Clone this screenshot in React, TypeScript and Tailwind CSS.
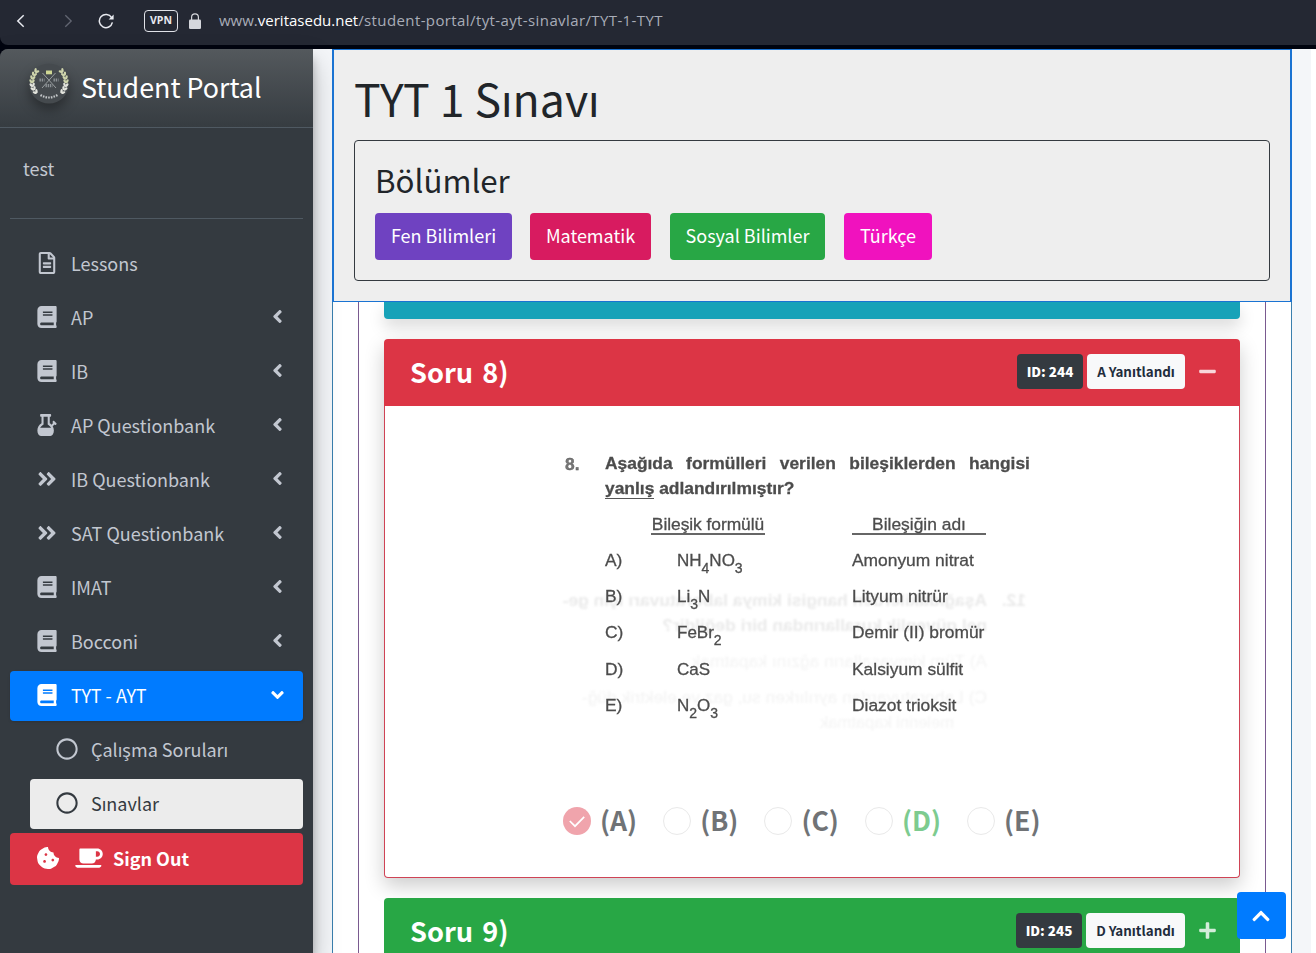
import React from "react";
import {
  FaAngleDoubleRight,
  FaAngleDown,
  FaAngleLeft,
  FaBong,
  FaBook,
  FaChevronUp,
  FaCoffee,
  FaCookieBite,
  FaMinus,
  FaPlus,
  FaRegCircle,
  FaRegFileAlt,
} from "react-icons/fa";

type IconType = React.ComponentType<{ className?: string }>;

const navItems: { label: string; icon: IconType; expandable: boolean }[] = [
  { label: "Lessons", icon: FaRegFileAlt, expandable: false },
  { label: "AP", icon: FaBook, expandable: true },
  { label: "IB", icon: FaBook, expandable: true },
  { label: "AP Questionbank", icon: FaBong, expandable: true },
  { label: "IB Questionbank", icon: FaAngleDoubleRight, expandable: true },
  { label: "SAT Questionbank", icon: FaAngleDoubleRight, expandable: true },
  { label: "IMAT", icon: FaBook, expandable: true },
  { label: "Bocconi", icon: FaBook, expandable: true },
];

const sections = [
  { label: "Fen Bilimleri", style: "w-[137px] mr-[18px] bg-[#6f42c1]" },
  { label: "Matematik", style: "w-[121px] mr-[19px] bg-[#d81b60]" },
  { label: "Sosyal Bilimler", style: "w-[155px] mr-[19px] bg-[#28a745]" },
  { label: "Türkçe", style: "w-[88px] bg-[#f012be]" },
];

function BrowserBar() {
  return (
    <div className="h-[49px] shrink-0 bg-[#00040f]">
      <div className="flex h-[45px] items-center rounded-bl-lg bg-[#242833] pb-1 pl-[14px] text-[#e8eaf0]">
        <svg className="h-[14px] w-[14px]" viewBox="0 0 14 14" fill="none" stroke="currentColor" strokeWidth="1.5">
          <path d="M9.7 1.2 3.8 7l5.900 5.800" />
        </svg>
        <svg className="ml-[33px] h-[14px] w-[14px] text-[#626672]" viewBox="0 0 14 14" fill="none" stroke="currentColor" strokeWidth="1.3">
          <path d="M4.3 1.2 10.2 7l-5.900 5.800" />
        </svg>
        <svg className="ml-[23px] h-[16px] w-[16px]" viewBox="0 0 16 16" fill="none" stroke="currentColor" strokeWidth="1.5">
          <path d="M14.4 9.4A6.6 6.6 0 1 1 13.6 4.6" />
          <path d="M15.6 1.6v5h-5z" fill="currentColor" stroke="none" />
        </svg>
        <span className="ml-[30px] flex h-[22px] w-[34px] items-center justify-center rounded-[4px] border border-[#e0e2e8] font-['Open_Sans',sans-serif] text-[10.5px] font-bold leading-none">
          VPN
        </span>
        <svg className="ml-[11px] h-[16px] w-[12px] text-[#d5d7dc]" viewBox="0 0 12 16">
          <path d="M2.6 7V4.2a3.4 3.4 0 0 1 6.8 0V7" fill="none" stroke="currentColor" strokeWidth="1.2" />
          <rect x="0" y="6.5" width="12" height="9.5" rx="1.3" fill="currentColor" />
        </svg>
        <span className="ml-[18px] whitespace-nowrap pb-[2px] font-['Open_Sans',sans-serif] text-[15px] leading-5 text-[#a9adb8]">
          www.<span className="text-white">veritasedu.net</span>
          <span className="tracking-[0.39px]">/student-portal/tyt-ayt-sinavlar/TYT-1-TYT</span>
        </span>
      </div>
    </div>
  );
}

const laurel = [
  { x: 12.2, y: 5.5, turn: 40 },
  { x: 14.6, y: 8.6, turn: 28 },
  { x: 16.2, y: 12, turn: 14 },
  { x: 17, y: 15.6, turn: 2 },
  { x: 16.8, y: 19.4, turn: -10 },
  { x: 15.8, y: 23, turn: -24 },
  { x: 13.8, y: 26.4, turn: -40 },
];

function LaurelBranch() {
  return (
    <>
      {laurel.map(({ x, y, turn }) => (
        <g key={y} transform={`translate(${x} ${y}) rotate(${-turn})`} fill={y < 18 ? "#ced4ac" : "#e3e4dd"}>
          <ellipse cx="1.3" cy="0" rx="1.2" ry="2.2" transform="rotate(30)" />
          <ellipse cx="-1.3" cy="0" rx="1.2" ry="2.2" transform="rotate(-30)" />
        </g>
      ))}
    </>
  );
}

function Crest() {
  return (
    <svg className="h-[40px] w-[40px] overflow-visible drop-shadow-[0_6px_6px_rgba(0,0,0,0.35)]" viewBox="0 0 40 40">
      <circle cx="20" cy="19.5" r="20" fill="#454a4e" />
      <g transform="translate(20 1)">
        <LaurelBranch />
      </g>
      <g transform="translate(20 1) scale(-1 1)">
        <LaurelBranch />
      </g>
      <path d="M13.5 9 27 24M26.5 9 13 24" stroke="#a2a6a8" strokeWidth="0.9" />
      <path d="M17 6.5h6v3.800h-6z" fill="#cfd794" />
      <path d="M10.5 16h5M24.5 16h5M16.5 21.700h7" stroke="#8d9296" strokeWidth="3.200" strokeDasharray="1.400 0.800" />
      <path d="M11.5 31q8.500 5 17 0" fill="none" stroke="#c3c6c8" strokeWidth="2.200" strokeDasharray="1.600 1.100" />
    </svg>
  );
}

function Sidebar() {
  return (
    <aside className="relative z-10 flex w-[313px] shrink-0 flex-col rounded-tl-lg bg-[#343a40] text-[18px] text-[#c2c7d0] shadow-[0_14px_28px_rgba(0,0,0,0.25),0_10px_10px_rgba(0,0,0,0.22)]">
      <div className="flex h-[79px] shrink-0 items-center rounded-tl-lg border-b border-[#4f5962] bg-gradient-to-b from-[#54595d] to-[#363c41] pl-[29px]">
        <div className="-mt-2">
          <Crest />
        </div>
        <span className="ml-[12px] whitespace-nowrap pb-[3px] text-[26.8px] leading-9 text-white">Student Portal</span>
      </div>
      <div className="mx-[10px] h-[91px] shrink-0 border-b border-[#4f5962] pl-[13px] pt-[26px] leading-7">test</div>
      <nav className="mx-[10px] mt-[20px] flex flex-col gap-1">
        {navItems.map(({ label, icon: Icon, expandable }) => (
          <div key={label} className="flex h-[50px] items-center pl-[26px] pr-[19px]">
            <Icon className="mb-[3px] h-[22px] w-[22px]" />
            <span className="ml-[13px] pb-[2px] leading-7">{label}</span>
            {expandable && <FaAngleLeft className="mb-[3px] ml-auto h-[21px] w-[13px]" />}
          </div>
        ))}
        <div className="flex h-[50px] items-center rounded bg-[#007bff] pl-[26px] pr-[18px] text-white shadow">
          <FaBook className="mb-[3px] h-[22px] w-[22px]" />
          <span className="ml-[13px] pb-[2px] leading-7">TYT - AYT</span>
          <FaAngleDown className="mb-[3px] ml-auto h-[20px] w-[15px]" />
        </div>
        <div className="ml-5 flex h-[50px] items-center pl-[26px]">
          <FaRegCircle className="mb-[3px] h-[22px] w-[22px]" />
          <span className="ml-[13px] pb-[2px] leading-7">Çalışma Soruları</span>
        </div>
        <div className="ml-5 flex h-[50px] items-center rounded bg-[#ececec] pl-[26px] text-[#343a40]">
          <FaRegCircle className="mb-[3px] h-[22px] w-[22px]" />
          <span className="ml-[13px] pb-[2px] leading-7">Sınavlar</span>
        </div>
        <div className="flex h-[52px] items-center rounded bg-[#dc3545] pl-[27px] font-bold text-white">
          <FaCookieBite className="mb-[3px] h-[22px] w-[22px]" />
          <FaCoffee className="mb-[3px] ml-4 h-[22px] w-[28px]" />
          <span className="ml-[10px] pb-[2px] leading-7">Sign Out</span>
        </div>
      </nav>
    </aside>
  );
}

function Sub({ children }: { children: React.ReactNode }) {
  return <sub className="relative -bottom-[7px] align-baseline text-[14px] leading-none">{children}</sub>;
}

const answers = [
  { key: "A)", formula: <>NH<Sub>4</Sub>NO<Sub>3</Sub></>, name: "Amonyum nitrat" },
  { key: "B)", formula: <>Li<Sub>3</Sub>N</>, name: "Lityum nitrür" },
  { key: "C)", formula: <>FeBr<Sub>2</Sub></>, name: "Demir (II) bromür" },
  { key: "D)", formula: <>CaS</>, name: "Kalsiyum sülfit" },
  { key: "E)", formula: <>N<Sub>2</Sub>O<Sub>3</Sub></>, name: "Diazot trioksit" },
];

/* Print from the back of the scanned sheet, faintly visible through the paper. */
function ShowThrough() {
  return (
    <div aria-hidden className="absolute left-[-2px] top-[182px] w-[468px] -scale-x-100 whitespace-nowrap pl-[1px] text-[17.4px] leading-[25px] blur-[0.9px]">
      <div className="flex font-bold text-[#eaeaea]">
        <span className="w-[39px]">12.</span>
        <div>
          <div>Aşağıdakilerden hangisi kimya laboratuvarı için ge-</div>
          <div>nel güvenlik kurallarından biri değildir?</div>
        </div>
      </div>
      <div className="mt-[11px] pl-[39px] text-[#f4f4f4]">A) Tüm kimyasalların ağzını kapatmak</div>
      <div className="mt-[11px] pl-[39px] text-[#f3f3f3]">C) Laboratuvardan ayrılırken su, gaz ve elektrik düğ-</div>
      <div className="pl-[72px] text-[16.5px] text-[#f4f4f4]">melerini kapatmak</div>
    </div>
  );
}

function QuestionScan() {
  return (
    <div className="relative ml-[176px] w-[480px] pt-[45px] font-['Liberation_Sans',sans-serif] text-[17.4px] text-[#4c4c4c]">
      <ShowThrough />
      <div className="relative blur-[0.35px] [-webkit-text-stroke:0.3px_#4c4c4c]">
        <div className="flex h-[51px]">
          <div className="w-[44px] shrink-0 pl-[4px] font-bold leading-[26px] text-[#777]">8.</div>
          <div className="w-[425px] shrink-0 font-bold leading-[25px]">
            <div className="flex justify-between">
              <span>Aşağıda</span>
              <span>formülleri</span>
              <span>verilen</span>
              <span>bileşiklerden</span>
              <span>hangisi</span>
            </div>
            <div className="whitespace-nowrap">
              <span className="inline-block h-[23px] border-b border-[#555]">yanlış</span> adlandırılmıştır?
            </div>
          </div>
        </div>
        <div className="mt-[10px] flex pl-[90px] leading-[25px]">
          <div className="h-[23px] w-[114px] whitespace-nowrap border-b-2 border-[#666] text-center tracking-[-0.05px]">Bileşik formülü</div>
          <div className="ml-[87px] h-[23px] w-[134px] whitespace-nowrap border-b-2 border-[#666] text-center">Bileşiğin adı</div>
        </div>
        <div className="mt-[8px] pl-[44px]">
          {answers.map((a) => (
            <div key={a.key} className="flex h-[36.2px] items-center whitespace-nowrap leading-[20px]">
              <span className="w-[72px] pb-[2px]">{a.key}</span>
              <span className="w-[175px] text-[17px]">{a.formula}</span>
              <span className="pb-[2px]">{a.name}</span>
            </div>
          ))}
        </div>
      </div>
    </div>
  );
}

const choices = [
  { label: "(A)", checked: true, correct: false },
  { label: "(B)", checked: false, correct: false },
  { label: "(C)", checked: false, correct: false },
  { label: "(D)", checked: false, correct: true },
  { label: "(E)", checked: false, correct: false },
];

function Choices() {
  return (
    <div className="mt-[77px] flex h-[40px] items-center gap-[26px] pl-[178px]">
      {choices.map((c) => (
        <div key={c.label} className="flex items-center">
          {c.checked ? (
            <span className="flex h-7 w-7 items-center justify-center rounded-full bg-[#f0a4ac]">
              <svg className="h-4 w-4" viewBox="0 0 16 16" fill="none" stroke="white" strokeWidth="1.7">
                <path d="M.8 8 6 13.2 15.2 3.8" />
              </svg>
            </span>
          ) : (
            <span className="h-7 w-7 rounded-full border border-[#e9e9e9]" />
          )}
          <span className={`ml-[9px] pb-[1px] text-[26.6px] font-bold leading-10 ${c.correct ? "text-[#7dcb8f]" : "text-[#707376]"}`}>{c.label}</span>
        </div>
      ))}
    </div>
  );
}

function CardHeader({ title, id, status, open }: { title: string; id: string; status: string; open: boolean }) {
  return (
    <div className={`flex h-[67px] items-center rounded-t px-[26px] ${open ? "bg-[#dc3545]" : "bg-[#28a745]"}`}>
      <h4 className="pb-[3px] text-[27.2px] font-bold leading-10 text-white [word-spacing:3px]">{title}</h4>
      <div className="mb-[2px] ml-auto flex items-center gap-1 text-[13.4px] font-bold leading-[35px]">
        <span className="h-[35px] w-[66px] rounded bg-[#343a40] text-center font-black text-white">{id}</span>
        <span className={`h-[35px] rounded bg-[#f8f9fa] text-center text-[#1f2d3d] ${open ? "w-[98px]" : "w-[99px]"}`}>{status}</span>
      </div>
      <span className="mb-[2px] ml-[14px] mr-[-3px] flex w-[18px] text-white/80">
        {open ? <FaMinus className="h-[19px] w-[17px]" /> : <FaPlus className="h-[19px] w-[17px]" />}
      </span>
    </div>
  );
}

function Content() {
  return (
    <main className="flex min-w-0 flex-1 bg-[#f4f6f9] pl-[19px]">
      <div className="flex w-[960px] flex-col">
        <header className="z-20 h-[253px] shrink-0 border-x-2 border-b border-t border-[#1a73d2] bg-[#eee] px-5 text-[#212529]">
          <h1 className="pt-[18px] text-[44.6px] leading-[60px]">TYT 1 Sınavı</h1>
          <div className="mt-[12px] h-[141px] rounded border border-[#343a40] px-5 pt-[20px]">
            <h2 className="text-[31.3px] leading-[38px]">Bölümler</h2>
            <div className="mt-[14px] flex">
              {sections.map((s) => (
                <button key={s.label} className={`h-[47px] rounded pb-[3px] text-[18px] leading-[44px] text-white ${s.style}`}>
                  {s.label}
                </button>
              ))}
            </div>
          </div>
        </header>
        <div className="flex-1 border-x border-[#3a7fae] bg-white px-[25px]">
          <div className="h-full border-x border-[#7a5a90] px-[25px]">
            <div className="h-[17px] rounded-b bg-[#17a2b8] shadow-[0_8px_16px_rgba(0,0,0,0.15)]" />
            <section className="mt-5 h-[539px] rounded bg-white shadow-[0_8px_20px_rgba(0,0,0,0.2)]">
              <CardHeader title="Soru 8)" id="ID: 244" status="A Yanıtlandı" open />
              <div className="h-[472px] rounded-b border border-t-0 border-[#cf4355]">
                <QuestionScan />
                <Choices />
              </div>
            </section>
            <section className="mt-[20px] h-[67px]">
              <CardHeader title="Soru 9)" id="ID: 245" status="D Yanıtlandı" open={false} />
            </section>
          </div>
        </div>
      </div>
      <div className="ml-auto w-[5px] bg-white" />
    </main>
  );
}

export default function App() {
  return (
    <div className="relative flex h-[953px] w-[1316px] flex-col overflow-hidden bg-[#00040f] font-['Noto_Sans_CJK_SC','Noto_Sans',sans-serif]">
      <BrowserBar />
      <div className="flex min-h-0 flex-1">
        <Sidebar />
        <Content />
      </div>
      <button className="absolute bottom-[14px] right-[30px] z-30 flex h-[47px] w-[49px] items-center justify-center rounded bg-[#007bff] pr-[1px] text-white">
        <FaChevronUp className="h-5 w-[18px]" />
      </button>
    </div>
  );
}
